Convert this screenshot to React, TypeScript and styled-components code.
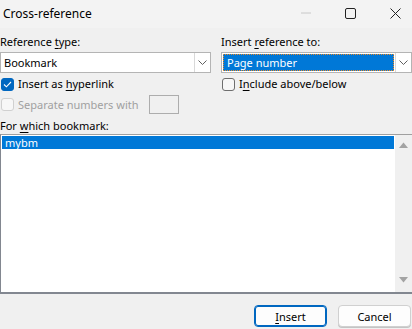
import styled, { createGlobalStyle } from "styled-components";

const GlobalStyle = createGlobalStyle`
  html, body {
    margin: 0;
    padding: 0;
    background: #f0f0f0;
  }
  body {
    font-family: "Noto Sans", "Open Sans", sans-serif;
    font-size: 11px;
    color: #000;
  }
`;

const Window = styled.div`
  width: 412px;
  height: 329px;
  display: flex;
  flex-direction: column;
  background: #f0f0f0;
  overflow: hidden;
`;

const TitleBar = styled.div`
  height: 28px;
  display: flex;
  align-items: center;
  padding-left: 3px;
  background: #f3f3f3;
`;

const Title = styled.div`
  flex: 1;
  font-size: 12px;
  margin-top: -2px;
`;

const Caption = styled.div`
  display: flex;
  margin-right: -6px;
`;

const CaptionButton = styled.div`
  width: 45px;
  height: 28px;
  display: flex;
  align-items: center;
  justify-content: center;
  margin-top: -2px;
`;

const Body = styled.div`
  flex: 1;
  display: flex;
  flex-direction: column;
  padding-top: 6px;
`;

const Columns = styled.div`
  display: grid;
  grid-template-columns: 211px 191px;
  column-gap: 10px;
  align-items: start;
`;

const Column = styled.div`
  display: flex;
  flex-direction: column;
`;

const Label = styled.div`
  height: 16px;
  line-height: 16px;
  margin-bottom: 2px;
  white-space: nowrap;
`;

const Key = styled.span`
  text-decoration: underline;
  text-underline-offset: 2px;
`;

const Combo = styled.div`
  height: 21px;
  display: flex;
  border: 1px solid #b4b4b4;
  background: #fff;
  box-sizing: border-box;
`;

const ComboValue = styled.div<{ $selected?: boolean }>`
  flex: 1;
  display: flex;
  align-items: center;
  padding-left: ${(p) => (p.$selected ? "4px" : "3px")};
  margin: ${(p) => (p.$selected ? "1px" : "0")};
  background: ${(p) => (p.$selected ? "#0078d7" : "transparent")};
  color: ${(p) => (p.$selected ? "#fff" : "#000")};
  outline: ${(p) => (p.$selected ? "1px dotted #f08a24" : "none")};
  outline-offset: -1px;
  white-space: nowrap;
`;

const ComboArrow = styled.div`
  width: 15px;
  display: flex;
  align-items: center;
  justify-content: center;
  border-left: 1px solid #d9d9d9;
  background: #fff;
`;

const CheckRow = styled.div<{ $disabled?: boolean }>`
  height: ${(p) => (p.$disabled ? "19px" : "14px")};
  line-height: 14px;
  display: flex;
  align-items: center;
  gap: 4px;
  margin-top: 4px;
  color: ${(p) => (p.$disabled ? "#a0a0a0" : "#000")};
  white-space: nowrap;
`;

const Box = styled.div<{ $checked?: boolean; $disabled?: boolean }>`
  width: 13px;
  height: 13px;
  flex-shrink: 0;
  box-sizing: border-box;
  border-radius: 3px;
  margin-left: 1px;
  display: flex;
  align-items: center;
  justify-content: center;
  background: ${(p) => (p.$checked ? "#0067c0" : "#f7f7f7")};
  border: 1px solid
    ${(p) => (p.$checked ? "#0067c0" : p.$disabled ? "#d0d0d0" : "#6e6e6e")};
`;

const SmallInput = styled.div`
  width: 30px;
  height: 19px;
  box-sizing: border-box;
  border: 1px solid #adadad;
  background: #f0f0f0;
  margin-left: 7px;
`;

const ListLabel = styled(Label)`
  margin-top: 4px;
  margin-bottom: 0;
`;

const ListBox = styled.div`
  height: 160px;
  display: flex;
  background: #fff;
  box-sizing: border-box;
  border-top: 1px solid #a0a0a0;
  border-left: 1px solid #828790;
  border-bottom: 2px solid #828790;
`;

const ListItems = styled.div`
  flex: 1;
  padding: 1px 1px 0 1px;
`;

const ListItem = styled.div<{ $selected?: boolean }>`
  height: 13px;
  line-height: 13px;
  padding-left: 3px;
  background: ${(p) => (p.$selected ? "#0078d7" : "transparent")};
  color: ${(p) => (p.$selected ? "#fff" : "#000")};
`;

const ScrollBar = styled.div`
  width: 17px;
  display: flex;
  flex-direction: column;
  justify-content: space-between;
  align-items: center;
  background: #f0f0f0;
  padding: 7px 0 9px;
  box-sizing: border-box;
`;

const Footer = styled.div`
  display: flex;
  justify-content: flex-end;
  gap: 11px;
  padding: 11px 1px 0 0;
`;

const Button = styled.div<{ $default?: boolean }>`
  width: 73px;
  height: 22px;
  box-sizing: border-box;
  display: flex;
  align-items: center;
  justify-content: center;
  border-radius: 4px;
  background: #fdfdfd;
  border: 1px solid ${(p) => (p.$default ? "#0067c0" : "#d0d0d0")};
  box-shadow: ${(p) =>
    p.$default ? "inset 0 0 0 1px #0067c0" : "0 1px 0 #c4c4c4"};
`;

const Chevron = () => (
  <svg width="9" height="5" viewBox="0 0 9 5">
    <path d="M0.5 0.5 L4.5 4.5 L8.5 0.5" fill="none" stroke="#606060" strokeWidth="1" />
  </svg>
);

const Check = () => (
  <svg width="9" height="7" viewBox="0 0 9 7">
    <path d="M1 3.5 L3.4 5.8 L8 1" fill="none" stroke="#fff" strokeWidth="1.1" />
  </svg>
);

export default function App() {
  return (
    <Window>
      <GlobalStyle />
      <TitleBar>
        <Title>Cross-reference</Title>
        <Caption>
          <CaptionButton>
            <svg width="10" height="2" viewBox="0 0 10 2">
              <path d="M0 1 H10" stroke="#c8c8c8" strokeWidth="1" />
            </svg>
          </CaptionButton>
          <CaptionButton>
            <svg width="11" height="11" viewBox="0 0 11 11">
              <rect x="0.5" y="0.5" width="10" height="10" rx="1.5" fill="none" stroke="#222" />
            </svg>
          </CaptionButton>
          <CaptionButton>
            <svg width="11" height="11" viewBox="0 0 11 11">
              <path d="M0.5 0.5 L10.5 10.5 M10.5 0.5 L0.5 10.5" stroke="#222" strokeWidth="1" />
            </svg>
          </CaptionButton>
        </Caption>
      </TitleBar>
      <Body>
        <Columns>
          <Column>
            <Label>
              Reference <Key>t</Key>ype:
            </Label>
            <Combo>
              <ComboValue>Bookmark</ComboValue>
              <ComboArrow>
                <Chevron />
              </ComboArrow>
            </Combo>
            <CheckRow>
              <Box $checked>
                <Check />
              </Box>
              <span>
                Insert as <Key>h</Key>yperlink
              </span>
            </CheckRow>
            <CheckRow $disabled>
              <Box $disabled />
              <span>Separate numbers with</span>
              <SmallInput />
            </CheckRow>
          </Column>
          <Column>
            <Label>
              Insert <Key>r</Key>eference to:
            </Label>
            <Combo>
              <ComboValue $selected>Page number</ComboValue>
              <ComboArrow>
                <Chevron />
              </ComboArrow>
            </Combo>
            <CheckRow>
              <Box />
              <span>
                I<Key>n</Key>clude above/below
              </span>
            </CheckRow>
          </Column>
        </Columns>
        <ListLabel>
          For <Key>w</Key>hich bookmark:
        </ListLabel>
        <ListBox>
          <ListItems>
            <ListItem $selected>mybm</ListItem>
          </ListItems>
          <ScrollBar>
            <svg width="9" height="6" viewBox="0 0 9 6">
              <path d="M0 6 L4.5 0.5 L9 6 Z" fill="#a3a3a3" />
            </svg>
            <svg width="9" height="6" viewBox="0 0 9 6">
              <path d="M0 0 L4.5 5.5 L9 0 Z" fill="#a3a3a3" />
            </svg>
          </ScrollBar>
        </ListBox>
        <Footer>
          <Button $default>
            <span>
              <Key>I</Key>nsert
            </span>
          </Button>
          <Button>Cancel</Button>
        </Footer>
      </Body>
    </Window>
  );
}
